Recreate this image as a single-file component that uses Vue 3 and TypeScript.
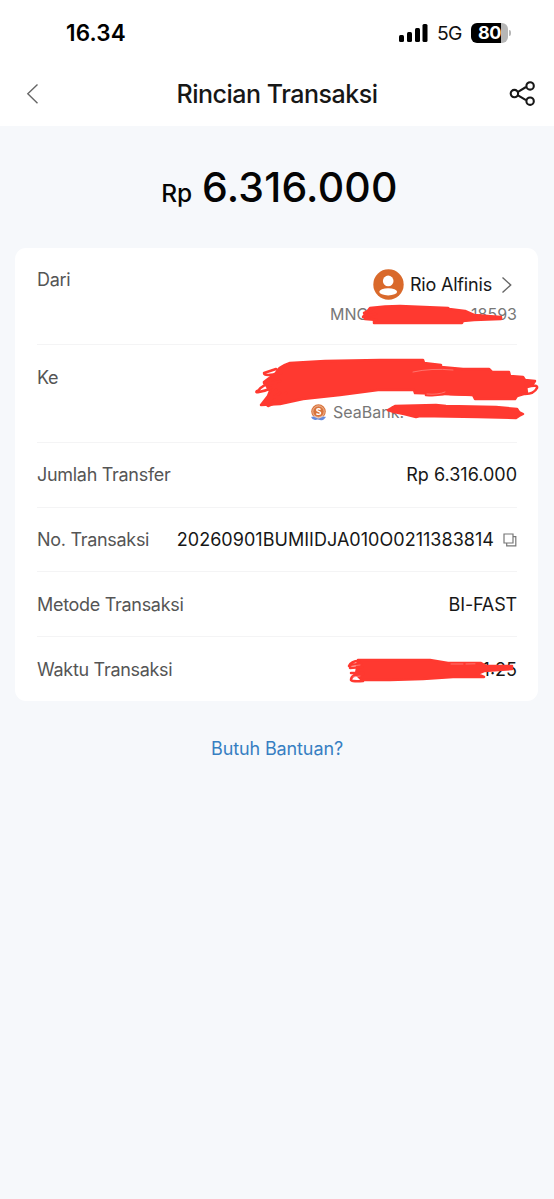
<script setup lang="ts">
interface DetailRow {
  label: string
  value: string
  kind: string
}

const rows: DetailRow[] = [
  { label: 'Jumlah Transfer', value: 'Rp 6.316.000', kind: 'total' },
  { label: 'No. Transaksi', value: '20260901BUMIIDJA010O0211383814', kind: 'reference' },
  { label: 'Metode Transaksi', value: 'BI-FAST', kind: 'method' },
  { label: 'Waktu Transaksi', value: '1:25', kind: 'time' },
]
</script>

<template>
  <main class="screen">
    <div class="status">
      <span class="clock">16.34</span>
      <div class="indicators">
        <svg class="signal" width="29" height="18" viewBox="0 0 29 18">
          <rect x="0" y="11" width="5" height="7" rx="1.5" />
          <rect x="8" y="8" width="5" height="10" rx="1.5" />
          <rect x="16" y="4" width="5" height="14" rx="1.5" />
          <rect x="23.5" y="0" width="5" height="18" rx="1.5" />
        </svg>
        <span class="network">5G</span>
        <div class="battery"><span>80</span></div>
        <i class="battery-tip"></i>
      </div>
    </div>

    <header class="header">
      <svg class="back" width="14" height="22" viewBox="0 0 14 22">
        <path d="M11.5 1.5 1.8 10.8 11.5 20.3" />
      </svg>
      <h1>Rincian Transaksi</h1>
      <svg class="share" width="28" height="28" viewBox="0 0 28 28">
        <path d="M8.6 12.1 17 7M8.6 15.1 17 20.2" />
        <circle cx="5.4" cy="13.6" r="3.7" />
        <circle cx="21.1" cy="5.9" r="3.7" />
        <circle cx="21.1" cy="21.2" r="3.7" />
      </svg>
    </header>

    <section class="amount">
      <span class="currency">Rp</span>
      <span class="number">6.316.000</span>
    </section>

    <section class="card">
      <div class="row party">
        <span class="label">Dari</span>
        <div class="person">
          <div class="name">
            <svg width="31" height="31" viewBox="0 0 31 31">
              <circle cx="15.5" cy="15.5" r="15.2" fill="#d9692b" />
              <circle cx="15.2" cy="11.9" r="5.3" fill="#fff" />
              <ellipse cx="15.2" cy="22.8" rx="8.9" ry="3.6" fill="#fff" />
            </svg>
            <span>Rio Alfinis</span>
            <svg class="next" width="12" height="18" viewBox="0 0 12 18">
              <path d="m1.5 1.5 8.2 7.5-8.2 7.5" />
            </svg>
          </div>
          <div class="account"><span>MNC</span><span>18593</span></div>
        </div>
      </div>
      <div class="row party">
        <span class="label">Ke</span>
        <div class="bank">
          <svg width="17" height="17" viewBox="0 0 17 17">
            <circle cx="8.5" cy="7.6" r="7.3" fill="#d9743c" />
            <circle cx="8.5" cy="7.6" r="5.7" fill="none" stroke="#f6d6c2" stroke-width=".7" />
            <path d="M10.5 5.7C9.6 4.5 6.7 4.400 6.700 6s3.900 1.200 3.900 3-3.300 1.800-4.200.5" fill="none" stroke="#fff" stroke-width="1.4" />
            <path d="M1 13.200q2.500-1.500 5 .2t5 0 5-.4l-2 2.200q-1.500 1.800-4 .8t-4.500 0Q3 16.400 1 13.200Z" fill="#668bdc" />
            <path d="M1 13q2.500-1.500 5 .2t5 0 5-.5" fill="none" stroke="#dce8ff" stroke-width=".7" />
          </svg>
          <span>SeaBank:</span>
        </div>
      </div>
      <div v-for="row in rows" :key="row.label" class="row" :class="row.kind">
        <span class="label">{{ row.label }}</span>
        <div class="value">
          <span>{{ row.value }}</span>
          <svg v-if="row.kind === 'reference'" class="copy" width="14" height="14" viewBox="0 0 14 14">
            <path d="M1 1H10V10H1ZM10.200 3.700H12.800V12.800H3.700V10.300" />
          </svg>
        </div>
      </div>

      <svg class="marker" width="554" height="460" viewBox="0 248 554 460">
        <path d="M363 317 370 308Q385 306 400 306L448 308 449 309 465 311 474 315 501 317 501 319 474 320 463 321 462 323 374 323 374 319Z" />
        <path d="m364 313 9-4m-9 7 12-2m-11 5 12 1" />
        <path d="M276 373Q278 367 290 363L325 361 380 360H423L424 363 441 365 441 367 463 369 489 369 492 372 509 372 510 376 523 377 525 380 535 381 533 384 526 386 527 393 517 396 515 399 475 399 473 395 415 393 414 390 378 390 340 395 303 399 280 404 261 405 268 396 270 391 264 382Z" />
        <path class="loop" d="M426 395Q431 390 450 392q-8 4-24 3M450 394l26 1M527 387q11-3 10 1-3 6-12 6" />
        <path class="loop" d="M276 369 264 373q0 4 17 0m-4 4-13 6q6 1 16-2m-23 11q6-9 20-10-5 8-18 10-4 1-2-1m19-1-8 8m18-5-9 9-9 4q-4-2 12-13" />
        <path d="m388 410 7-4 41-1 10 1 50 1 21 2 2 3 4 2-4 2-3 2-38-1-58-1-4 1-12-3-10-2Z" />
        <path d="M358 660 430 660 448 663 481 663 486 666 512 666 512 669 484 671 477 674 484 677 453 677 423 679 390 680H362L356 674 357 668Z" />
        <path class="loop" d="M359 661q-8 0-10 5 4-2 12-2m-11 4 12-1m-11 6h12m-12 7q0-6 12-6m-12 6q2 2 12 1" />
        <path class="gap" d="M413 372q18-4 40-2M451 664h12m3 0 9-.2M427 394q11 1 18-2M352 666l8-1M353 677l7-1" />
      </svg>
    </section>

    <a class="help">Butuh Bantuan?</a>
  </main>
</template>

<style>
html,
body {
  background: #f6f8fb;
}
</style>

<style scoped>
.screen {
  height: 1199px;
  overflow: hidden;
  background: #f6f8fb;
  color: #171717;
  font-family: Inter, "Liberation Sans", sans-serif;
  font-size: 18px;
}
.status {
  box-sizing: border-box;
  height: 60px;
  padding: 6px 43px 0 66px;
  display: flex;
  align-items: center;
  justify-content: space-between;
  background: #fff;
}
.clock {
  font-size: 22.5px;
  font-weight: 600;
  line-height: 26px;
  letter-spacing: 0.15px;
  color: #000;
}
.indicators {
  display: flex;
  align-items: center;
}
.signal {
  fill: #000;
}
.network {
  margin-left: 9px;
  width: 27px;
  font-size: 19.3px;
  letter-spacing: -0.6px;
  color: #111;
}
.battery {
  box-sizing: border-box;
  margin-left: 7px;
  width: 37px;
  height: 20px;
  padding-left: 7px;
  border-radius: 6px;
  background: linear-gradient(90deg, #000 0 30px, #b6b6b6 30px);
  color: #fff;
  font-size: 18px;
  font-weight: 700;
  line-height: 20px;
  letter-spacing: -0.5px;
}
.battery-tip {
  width: 2px;
  height: 6px;
  margin-left: 1px;
  border-radius: 0 2px 2px 0;
  background: #b6b6b6;
}
.header {
  box-sizing: border-box;
  height: 66px;
  padding: 2px 17px 0 26px;
  display: flex;
  align-items: center;
  justify-content: space-between;
  background: #fff;
}
.header h1 {
  margin: 0 0 0 5px;
  font-size: 25px;
  font-weight: 500;
  line-height: 30px;
  letter-spacing: -0.48px;
}
.back,
.next,
.copy {
  fill: none;
  stroke: #666;
  stroke-width: 1.4;
}
.copy {
  stroke: #777;
  stroke-width: 1.2;
}
.share {
  fill: none;
  stroke: #171717;
  stroke-width: 2.1;
}
.amount {
  height: 122px;
  padding-right: 4px;
  display: flex;
  justify-content: center;
  align-items: baseline;
  gap: 10px;
  color: #050505;
}
.amount::before {
  content: "";
  height: 76px;
}
.currency {
  margin-left: -1px;
  font-size: 24.5px;
  font-weight: 500;
  letter-spacing: -0.2px;
}
.number {
  font-size: 41px;
  font-weight: 500;
  letter-spacing: 0.2px;
}
.card {
  position: relative;
  box-sizing: border-box;
  width: 523px;
  height: 453px;
  margin-left: 15px;
  padding: 0 21px 0 22px;
  border-radius: 11px;
  background: #fff;
}
.row {
  box-sizing: border-box;
  height: 64.8px;
  padding-top: 1px;
  display: flex;
  align-items: center;
  justify-content: space-between;
  border-bottom: 1.5px solid #f4f4f5;
  line-height: 24px;
}
.row.time {
  border: 0;
  padding-top: 0;
}
.party {
  height: 97.4px;
  padding-top: 0;
  align-items: flex-start;
}
.party .label {
  padding-top: 20px;
}
.party + .party .label {
  padding-top: 21px;
}
.label {
  color: #555;
  letter-spacing: -0.3px;
}
.person {
  width: 187px;
  padding-top: 21px;
}
.name {
  display: flex;
  align-items: center;
  justify-content: flex-end;
}
.name span {
  margin-left: 6px;
  letter-spacing: -0.18px;
}
.next {
  margin-left: 9px;
  margin-right: 4px;
}
.account {
  display: flex;
  justify-content: space-between;
  color: #777;
  font-size: 16px;
  line-height: 20px;
  margin-top: 4px;
}
.bank {
  width: 207px;
  padding-top: 57px;
  display: flex;
  align-items: center;
  gap: 6px;
  color: #777;
  font-size: 16px;
  line-height: 20px;
}
.value {
  display: flex;
  align-items: center;
  gap: 9px;
}
.reference .value {
  letter-spacing: 0.03px;
}
.method .value {
  letter-spacing: -0.15px;
}
.marker {
  position: absolute;
  left: -15px;
  top: 0;
  fill: #ff3930;
  stroke: #ff3930;
  stroke-width: 2.5;
  stroke-linecap: round;
  stroke-linejoin: round;
  pointer-events: none;
}
.marker .loop {
  fill: none;
}
.marker .gap {
  fill: none;
  stroke: #ff8d87;
  stroke-width: 0.7;
}
.help {
  display: block;
  margin-top: 36px;
  color: #367fc2;
  line-height: 24px;
  letter-spacing: -0.12px;
  text-align: center;
}
</style>
